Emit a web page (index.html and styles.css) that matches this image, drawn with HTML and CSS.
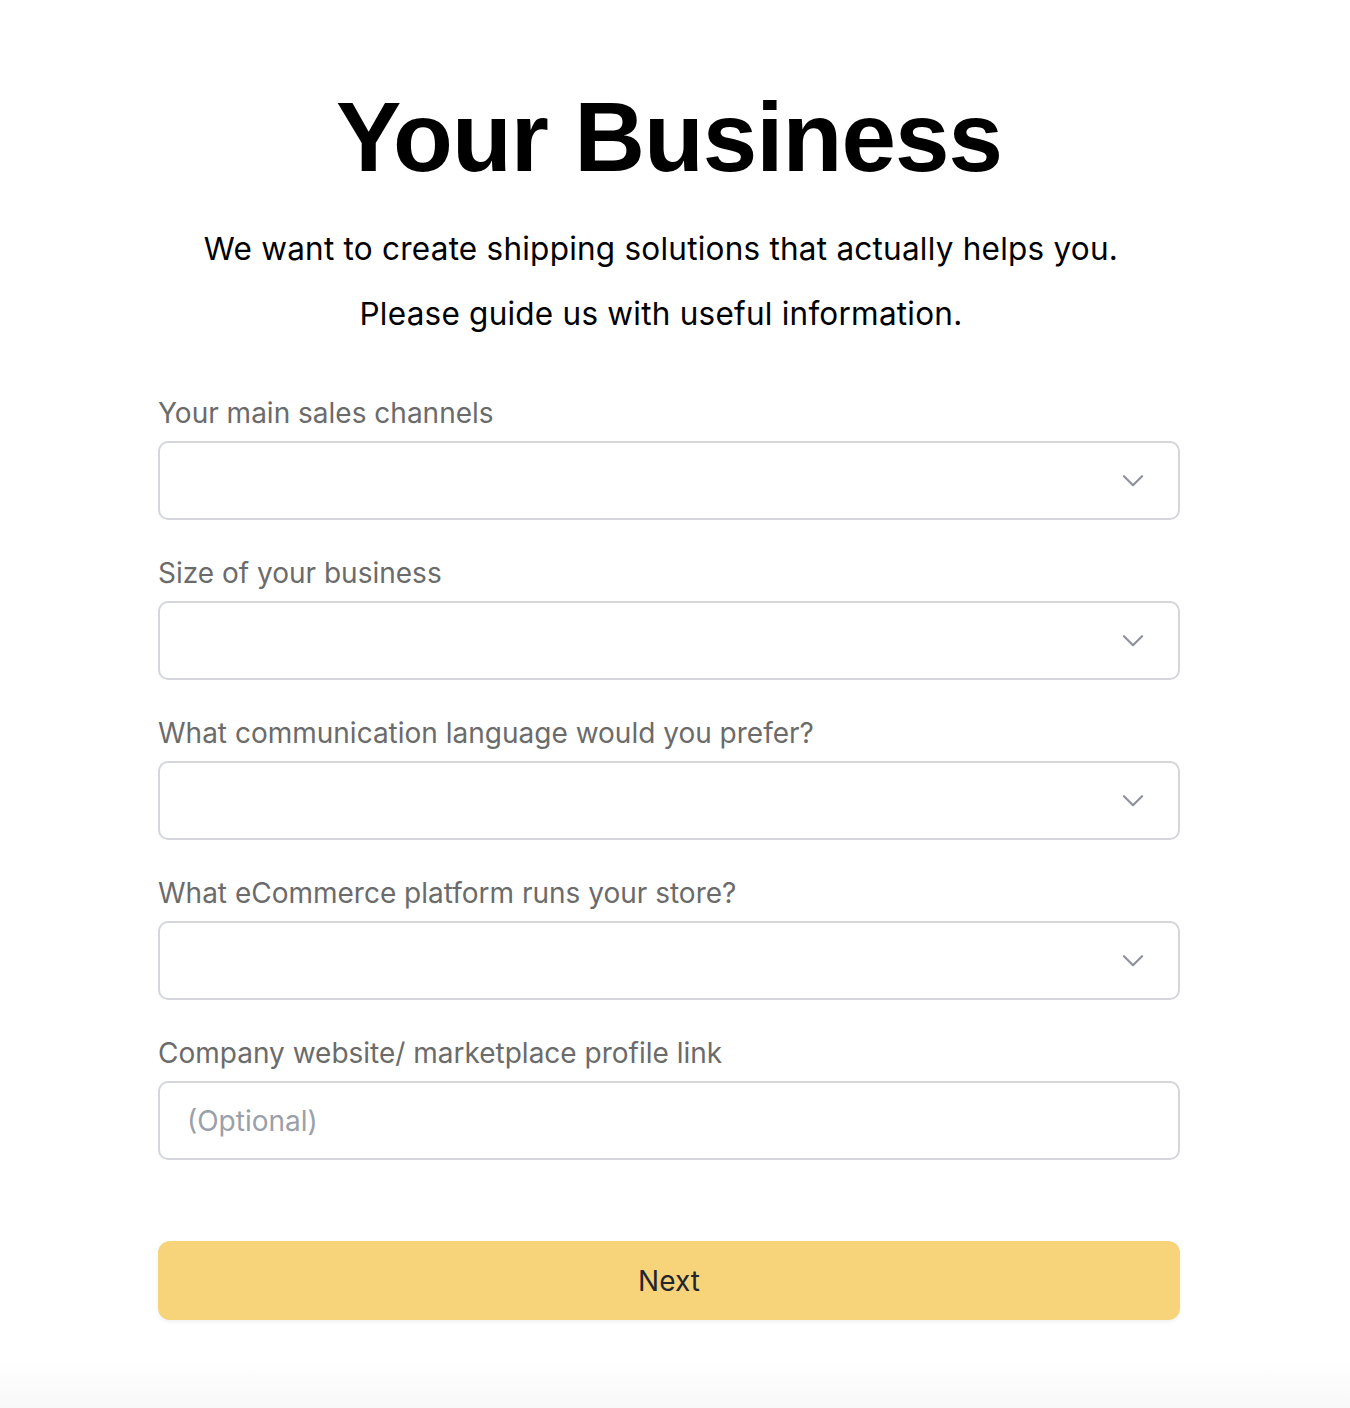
FILE: index.html
```html
<!DOCTYPE html>
<html lang="en">
<head>
<meta charset="utf-8">
<title>Your Business</title>
<link rel="stylesheet" href="styles.css">
</head>
<body>
<main class="page">
  <h1 class="title">Your Business</h1>
  <p class="lead">We want to create shipping solutions that actually helps you.</p>
  <p class="lead">Please guide us with useful information.</p>
  <form class="form">
    <div class="field">
      <label class="label">Your main sales channels</label>
      <div class="select">
        <svg class="chev" width="20" height="12" viewBox="0 0 20 12"><path d="M1 1.2 L10 10.2 L19 1.2" fill="none" stroke="#8e929b" stroke-width="2.2" stroke-linecap="round" stroke-linejoin="round"/></svg>
      </div>
    </div>
    <div class="field">
      <label class="label">Size of your business</label>
      <div class="select">
        <svg class="chev" width="20" height="12" viewBox="0 0 20 12"><path d="M1 1.2 L10 10.2 L19 1.2" fill="none" stroke="#8e929b" stroke-width="2.2" stroke-linecap="round" stroke-linejoin="round"/></svg>
      </div>
    </div>
    <div class="field">
      <label class="label">What communication language would you prefer?</label>
      <div class="select">
        <svg class="chev" width="20" height="12" viewBox="0 0 20 12"><path d="M1 1.2 L10 10.2 L19 1.2" fill="none" stroke="#8e929b" stroke-width="2.2" stroke-linecap="round" stroke-linejoin="round"/></svg>
      </div>
    </div>
    <div class="field">
      <label class="label">What eCommerce platform runs your store?</label>
      <div class="select">
        <svg class="chev" width="20" height="12" viewBox="0 0 20 12"><path d="M1 1.2 L10 10.2 L19 1.2" fill="none" stroke="#8e929b" stroke-width="2.2" stroke-linecap="round" stroke-linejoin="round"/></svg>
      </div>
    </div>
    <div class="field">
      <label class="label">Company website/ marketplace profile link</label>
      <div class="input"><span class="placeholder">(Optional)</span></div>
    </div>
    <button type="button" class="next">Next</button>
  </form>
</main>
</body>
</html>
```

FILE: styles.css
```css
html, body {
  margin: 0;
  padding: 0;
}
body {
  min-height: 1408px;
  background: linear-gradient(to bottom, #ffffff 0, #ffffff 1360px, #f8f8f8 1408px);
  font-family: Inter, "Noto Sans", sans-serif;
  color: #000;
}
.page {
  width: 1022px;
  margin: 0 0 0 158px;
  padding-top: 82px;
  display: flex;
  flex-direction: column;
}
.title {
  margin: 0;
  font-family: "Liberation Sans", Arial, sans-serif;
  font-weight: 700;
  font-size: 98px;
  line-height: 110px;
  letter-spacing: -1px;
  text-align: center;
}
.lead {
  margin: 0 16px 0 0;
  font-size: 31.5px;
  letter-spacing: 0.23px;
  line-height: 65px;
  text-align: center;
  color: #000;
}
.lead:first-of-type {
  margin-top: 24px;
}
.form {
  display: flex;
  flex-direction: column;
  gap: 36px;
  margin-top: 50px;
}
.field {
  display: flex;
  flex-direction: column;
  gap: 11px;
}
.label {
  font-size: 28px;
  line-height: 34px;
  color: #6b6b6b;
}
.select, .input {
  height: 79px;
  box-sizing: border-box;
  border: 2px solid #d4d6dc;
  border-radius: 10px;
  background: #fff;
  display: flex;
  align-items: center;
}
.select {
  justify-content: flex-end;
  padding-right: 35px;
}
.input {
  padding-left: 27px;
}
.placeholder {
  font-size: 28px;
  color: #9aa0aa;
}
.chev {
  display: block;
}
.next {
  margin-top: 45px;
  height: 79px;
  border: none;
  border-radius: 12px;
  background: #f7d47a;
  box-shadow: 0 2px 4px rgba(0,0,0,0.06);
  font-family: Inter, "Noto Sans", sans-serif;
  font-size: 28px;
  color: #232630;
}
```
